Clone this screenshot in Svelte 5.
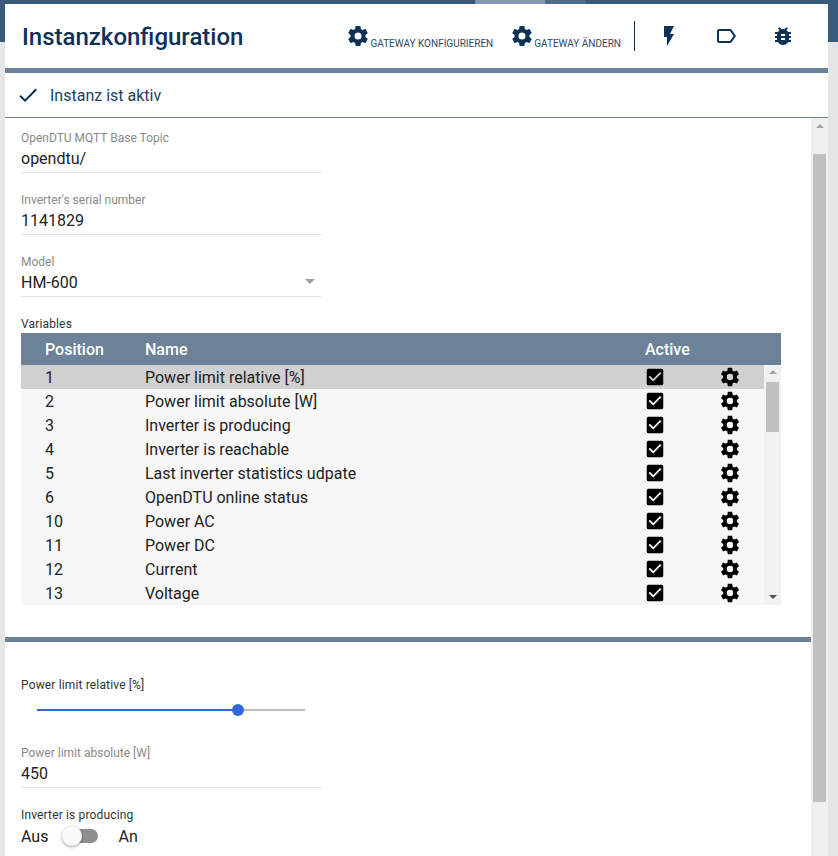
<script lang="ts">
	const cog = 'M12,15.5A3.5,3.5 0 0,1 8.5,12A3.5,3.5 0 0,1 12,8.5A3.5,3.5 0 0,1 15.5,12A3.5,3.5 0 0,1 12,15.5M19.43,12.97C19.47,12.65 19.5,12.33 19.5,12C19.5,11.67 19.47,11.34 19.43,11L21.54,9.37C21.73,9.22 21.78,8.95 21.66,8.73L19.66,5.27C19.54,5.05 19.27,4.96 19.05,5.05L16.56,6.05C16.04,5.66 15.5,5.32 14.87,5.07L14.5,2.42C14.46,2.18 14.25,2 14,2H10C9.75,2 9.54,2.18 9.5,2.42L9.13,5.07C8.5,5.32 7.96,5.66 7.44,6.05L4.95,5.05C4.73,4.96 4.46,5.05 4.34,5.27L2.34,8.73C2.21,8.95 2.27,9.22 2.46,9.37L4.57,11C4.53,11.34 4.5,11.67 4.5,12C4.5,12.33 4.53,12.65 4.57,12.97L2.46,14.63C2.27,14.78 2.21,15.05 2.34,15.27L4.34,18.73C4.46,18.95 4.73,19.03 4.95,18.95L7.44,17.94C7.96,18.34 8.5,18.68 9.13,18.93L9.5,21.58C9.54,21.82 9.75,22 10,22H14C14.25,22 14.46,21.82 14.5,21.58L14.87,18.93C15.5,18.67 16.04,18.34 16.56,17.94L19.05,18.95C19.27,19.03 19.54,18.95 19.66,18.73L21.66,15.27C21.78,15.05 21.73,14.78 21.54,14.63L19.43,12.97Z';
	const checkbox = 'M10,17L5,12L6.41,10.59L10,14.17L17.59,6.58L19,8M19,3H5C3.89,3 3,3.89 3,5V19A2,2 0 0,0 5,21H19A2,2 0 0,0 21,19V5C21,3.89 20.1,3 19,3Z';

	const rows = [
		{ pos: 1, name: 'Power limit relative [%]' },
		{ pos: 2, name: 'Power limit absolute [W]' },
		{ pos: 3, name: 'Inverter is producing' },
		{ pos: 4, name: 'Inverter is reachable' },
		{ pos: 5, name: 'Last inverter statistics udpate' },
		{ pos: 6, name: 'OpenDTU online status' },
		{ pos: 10, name: 'Power AC' },
		{ pos: 11, name: 'Power DC' },
		{ pos: 12, name: 'Current' },
		{ pos: 13, name: 'Voltage' }
	];

	const sliderValue = 75;
</script>

<div class="shell">
	<div class="tabs">
		<span class="tab tab-active"></span>
		<span class="tab tab-next"></span>
	</div>

	<div class="panel">
		<header class="toolbar">
			<h1>Instanzkonfiguration</h1>
			<div class="actions">
				<button class="action">
					<svg viewBox="0 0 24 24" width="24" height="24"><path d={cog} /></svg>
					<span>Gateway konfigurieren</span>
				</button>
				<button class="action">
					<svg viewBox="0 0 24 24" width="24" height="24"><path d={cog} /></svg>
					<span>Gateway ändern</span>
				</button>
				<span class="vline"></span>
				<div class="tools">
					<svg viewBox="0 0 24 24" width="24" height="24"><path d="M7,2V13H10V22L17,10H13L17,2H7Z" /></svg>
					<svg viewBox="0 0 24 24" width="24" height="24"><path d="M17.63 5.84C17.27 5.33 16.67 5 16 5L5 5.01C3.9 5.01 3 5.9 3 7v10c0 1.1.9 1.99 2 1.99L16 19c.67 0 1.27-.33 1.63-.84L22 12l-4.37-6.16zM16 17H5V7h11l3.55 5L16 17z" /></svg>
					<svg viewBox="0 0 24 24" width="24" height="24"><path d="M14,12H10V10H14M14,16H10V14H14M20,8H17.19C16.74,7.22 16.12,6.55 15.37,6.04L17,4.41L15.59,3L13.42,5.17C12.96,5.06 12.5,5 12,5C11.5,5 11.04,5.06 10.59,5.17L8.41,3L7,4.41L8.62,6.04C7.88,6.55 7.26,7.22 6.81,8H4V10H6.09C6.04,10.33 6,10.66 6,11V12H4V14H6V15C6,15.34 6.04,15.67 6.09,16H4V18H6.81C7.85,19.79 9.78,21 12,21C14.22,21 16.15,19.79 17.19,18H20V16H17.91C17.96,15.67 18,15.34 18,15V14H20V12H18V11C18,10.66 17.96,10.33 17.91,10H20V8Z" /></svg>
				</div>
			</div>
		</header>

		<div class="enabled">
			<svg viewBox="0 0 24 24" width="24" height="24"><path d="M9 16.17 4.83 12l-1.42 1.41L9 19 21 7l-1.41-1.41z" /></svg>
			<span>Instanz ist aktiv</span>
		</div>

		<div class="body">
			<div class="content">
				<section class="form">
					<div class="field">
						<span class="label">OpenDTU MQTT Base Topic</span>
						<span class="value">opendtu/</span>
					</div>
					<div class="field">
						<span class="label">Inverter's serial number</span>
						<span class="value">1141829</span>
					</div>
					<div class="field select">
						<span class="label">Model</span>
						<span class="value">HM-600</span>
						<span class="caret"></span>
					</div>

					<div class="caption">Variables</div>
					<div class="grid">
						<div class="grid-head">
							<span class="c-pos">Position</span>
							<span class="c-name">Name</span>
							<span class="c-active">Active</span>
						</div>
						<div class="grid-body">
							<div class="grid-rows">
								{#each rows as row, i}
									<div class="row" class:selected={i === 0}>
										<span class="c-pos">{row.pos}</span>
										<span class="c-name">{row.name}</span>
										<span class="c-active"><svg viewBox="0 0 24 24" width="22" height="22"><path d={checkbox} /></svg></span>
										<span class="c-gear"><svg viewBox="0 0 24 24" width="22" height="22"><path d={cog} /></svg></span>
									</div>
								{/each}
							</div>
							<div class="grid-scroll">
								<span class="arrow up"></span>
								<span class="grid-thumb"></span>
								<span class="arrow down"></span>
							</div>
						</div>
					</div>
				</section>

				<div class="divider"></div>

				<section class="states">
					<div class="slider-block">
						<span class="caption">Power limit relative [%]</span>
						<div class="slider">
							<span class="fill" style="width: {sliderValue}%"></span>
							<span class="knob"></span>
							<span class="rest"></span>
						</div>
					</div>
					<div class="field">
						<span class="label">Power limit absolute [W]</span>
						<span class="value">450</span>
					</div>
					<div class="switch-block">
						<span class="caption">Inverter is producing</span>
						<div class="switch-row">
							<span>Aus</span>
							<span class="switch"><span class="switch-thumb"></span></span>
							<span>An</span>
						</div>
					</div>
				</section>
			</div>

			<div class="page-scroll">
				<span class="arrow up"></span>
				<span class="page-thumb"></span>
			</div>
		</div>
	</div>
</div>

<style>
	:global(body) {
		margin: 0;
		overflow: hidden;
	}

	.shell {
		height: 856px;
		box-sizing: border-box;
		padding: 0 10px 0 5px;
		overflow: hidden;
		background: linear-gradient(#3a5a7c 42px, #e5e5e5 42px);
		font-family: Roboto, sans-serif;
		color: #1a1a1a;
	}

	.tabs {
		display: flex;
		height: 4px;
		padding-left: 470px;
	}

	.tab-active {
		width: 70px;
		background: #8498ae;
	}

	.tab-next {
		width: 41px;
		background: #4e6b8a;
	}

	.panel {
		height: 852px;
		display: flex;
		flex-direction: column;
		background: #fff;
	}

	.toolbar {
		height: 69px;
		flex: none;
		display: flex;
		align-items: center;
		justify-content: space-between;
		padding-left: 17px;
		box-sizing: border-box;
		border-bottom: 5px solid #6b8299;
	}

	h1 {
		margin: 2px 0 0;
		font-size: 24px;
		font-weight: 500;
		color: #0d3157;
	}

	.actions {
		display: flex;
		align-items: center;
		color: #0d3157;
	}

	.action {
		display: flex;
		align-items: flex-end;
		margin-left: 17px;
		padding: 0;
		border: 0;
		background: none;
		font: 400 10px Roboto, sans-serif;
		color: #33495f;
		text-transform: uppercase;
	}

	.action span {
		margin-bottom: -1px;
	}

	.action svg,
	.tools svg {
		fill: #0d3157;
		display: block;
	}

	.vline {
		width: 1px;
		height: 30px;
		margin-left: 13px;
		background: #0d3157;
	}

	.tools {
		display: flex;
		gap: 33px;
		padding: 0 33px 0 22px;
	}

	.enabled {
		height: 45px;
		flex: none;
		display: flex;
		align-items: center;
		gap: 10px;
		padding-left: 11px;
		box-sizing: border-box;
		border-bottom: 1px solid #6b8299;
		font-size: 16px;
		color: #24405c;
	}

	.enabled svg {
		fill: #0d3157;
	}

	.body {
		flex: 1;
		min-height: 0;
		display: flex;
	}

	.content {
		flex: 1;
		min-width: 0;
		overflow: hidden;
	}

	.form {
		padding: 13px 30px 32px 16px;
	}

	.field {
		position: relative;
		width: 300px;
		height: 42px;
		box-sizing: border-box;
		margin-bottom: 20px;
		border-bottom: 1px solid #e0e0e0;
		display: flex;
		flex-direction: column;
	}

	.label {
		font-size: 12px;
		line-height: 14px;
		color: #8a8a8a;
	}

	.value {
		margin-top: 3px;
		font-size: 16px;
		line-height: 21px;
		color: #222;
	}

	.caret {
		position: absolute;
		right: 6px;
		top: 24px;
		border: 5px solid transparent;
		border-top-color: #a0a0a0;
		border-bottom: 0;
	}

	.caption {
		display: block;
		font-size: 12px;
		line-height: 14px;
		letter-spacing: 0.15px;
		color: #333;
	}

	.grid {
		width: 760px;
		margin-top: 2px;
		font-size: 16px;
	}

	.grid-head {
		height: 32px;
		display: flex;
		align-items: center;
		background: #6b8299;
		color: #fff;
		font-weight: 500;
	}

	.grid-body {
		display: flex;
		height: 240px;
	}

	.grid-rows {
		flex: 1;
		min-width: 0;
		background: #f7f7f7;
	}

	.row {
		height: 24px;
		display: flex;
		align-items: center;
		color: #222;
	}

	.row.selected {
		background: #d0d0d0;
	}

	.c-pos {
		width: 124px;
		padding-left: 24px;
		box-sizing: border-box;
		flex: none;
	}

	.c-name {
		width: 499px;
		flex: none;
	}

	.c-active {
		width: 75px;
		flex: none;
		display: flex;
	}

	.grid-head .c-active {
		margin-left: 1px;
	}

	.c-gear {
		display: flex;
	}

	.c-active svg,
	.c-gear svg {
		fill: #000;
		display: block;
	}

	.grid-scroll {
		position: relative;
		width: 17px;
		background: #f1f1f1;
		display: flex;
		flex-direction: column;
		align-items: center;
	}

	.grid-thumb {
		position: absolute;
		top: 17px;
		width: 13px;
		height: 50px;
		background: #c1c1c1;
	}

	.arrow {
		display: block;
		border: 4px solid transparent;
	}

	.arrow.up {
		margin-top: 5px;
		border-top: 0;
		border-bottom-color: #a3a3a3;
	}

	.arrow.down {
		margin-top: auto;
		margin-bottom: 6px;
		border-bottom: 0;
		border-top-color: #505050;
	}

	.divider {
		height: 5px;
		background: #6b8299;
	}

	.states {
		padding: 36px 16px 0;
	}

	.slider-block {
		height: 68px;
	}

	.slider {
		position: relative;
		display: flex;
		align-items: center;
		width: 268px;
		height: 12px;
		margin: 12px 0 0 16px;
	}

	.fill {
		height: 2px;
		background: #3467d6;
	}

	.knob {
		width: 12px;
		height: 12px;
		flex: none;
		margin: 0 -6px;
		border-radius: 50%;
		background: #3467d6;
		z-index: 1;
	}

	.rest {
		flex: 1;
		height: 2px;
		background: #bdbdbd;
	}

	.switch-row {
		display: flex;
		align-items: center;
		height: 24px;
		margin-top: 2px;
		font-size: 16px;
		color: #222;
	}

	.switch {
		position: relative;
		width: 34px;
		height: 14px;
		margin: 0 20px 0 16px;
		border-radius: 7px;
		background: #8f8f8f;
	}

	.switch-thumb {
		position: absolute;
		left: -2px;
		top: -3px;
		width: 20px;
		height: 20px;
		border-radius: 50%;
		background: #fafafa;
		box-shadow: 0 1px 3px rgba(0, 0, 0, 0.4);
	}

	.page-scroll {
		position: relative;
		width: 17px;
		background: #efefef;
		display: flex;
		flex-direction: column;
		align-items: center;
	}

	.page-scroll .arrow.up {
		margin-top: 6px;
	}

	.page-thumb {
		position: absolute;
		top: 36px;
		width: 13px;
		height: 648px;
		background: #bfbfbf;
	}
</style>
